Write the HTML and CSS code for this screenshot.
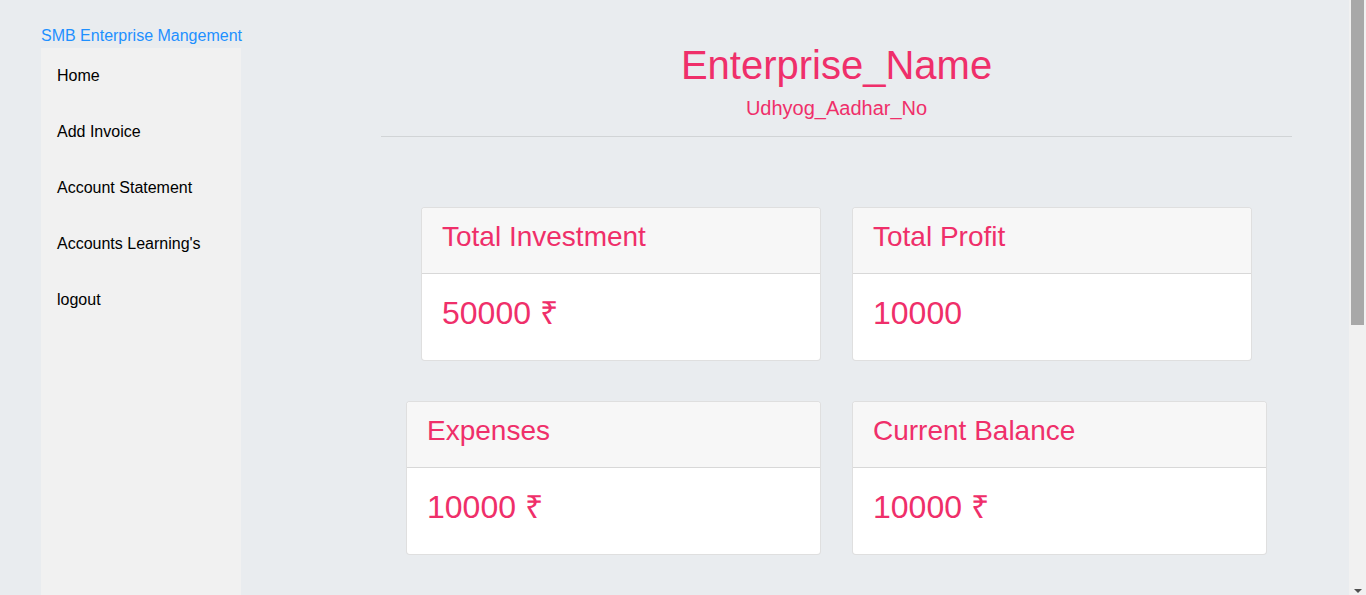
FILE: index.html
```html
<!DOCTYPE html>
<html lang="en">
<head>
<meta charset="utf-8">
<title>SMB Enterprise Mangement</title>
<link rel="stylesheet" href="styles.css">
</head>
<body>
<div class="layout">
  <aside class="side">
    <div class="brand">SMB Enterprise Mangement</div>
    <ul class="nav">
      <li><a href="#">Home</a></li>
      <li><a href="#">Add Invoice</a></li>
      <li><a href="#">Account Statement</a></li>
      <li><a href="#">Accounts Learning's</a></li>
      <li><a href="#">logout</a></li>
    </ul>
  </aside>
  <main class="main">
    <header class="head">
      <h1 class="ent-name">Enterprise_Name</h1>
      <p class="ent-no">Udhyog_Aadhar_No</p>
    </header>
    <hr class="rule">
    <div class="row row-one">
      <div class="card">
        <div class="card-head"><h3>Total Investment</h3></div>
        <div class="card-body"><h2>50000 ₹</h2></div>
      </div>
      <div class="card">
        <div class="card-head"><h3>Total Profit</h3></div>
        <div class="card-body"><h2>10000</h2></div>
      </div>
    </div>
    <div class="row row-two">
      <div class="card">
        <div class="card-head"><h3>Expenses</h3></div>
        <div class="card-body"><h2>10000 ₹</h2></div>
      </div>
      <div class="card">
        <div class="card-head"><h3>Current Balance</h3></div>
        <div class="card-body"><h2>10000 ₹</h2></div>
      </div>
    </div>
  </main>
</div>
<div class="scrollbar" aria-hidden="true">
  <div class="scroll-thumb"></div>
  <div class="scroll-arrow"></div>
</div>
</body>
</html>
```

FILE: styles.css
```css
* { box-sizing: border-box; }

html, body {
  margin: 0;
  padding: 0;
}

body {
  background: #e9ecef;
  font-family: "Liberation Sans", Arial, sans-serif;
  color: #000;
}

.layout {
  display: flex;
  align-items: flex-start;
  padding-right: 17px;
}

.side {
  margin-left: 41px;
  width: 200px;
  flex: none;
  padding-top: 27px;
  display: flex;
  flex-direction: column;
}

.brand {
  font-size: 16px;
  line-height: 18px;
  color: #1e90ff;
  white-space: nowrap;
  margin-bottom: 3px;
}

.nav {
  list-style: none;
  margin: 0;
  padding: 0;
  background: #f1f1f1;
  min-height: 1010px;
}

.nav a {
  display: block;
  padding: 18px 16px;
  font-size: 16px;
  line-height: 20px;
  color: #000;
  text-decoration: none;
}

.main {
  flex: 1;
  padding: 41px 57px 0 140px;
  display: flex;
  flex-direction: column;
}

.head {
  text-align: center;
  color: #ef2f6a;
}

.ent-name {
  margin: 0;
  font-size: 40px;
  line-height: 48px;
  font-weight: normal;
}

.ent-no {
  margin: 7px 0 0;
  font-size: 20px;
  line-height: 24px;
}

.rule {
  margin: 16px 0 0;
  border: 0;
  border-top: 1px solid rgba(0, 0, 0, 0.1);
  height: 0;
}

.row {
  display: flex;
  justify-content: center;
  gap: 31px;
}

.row-one { margin-top: 70px; }
.row-one .card { width: 400px; }

.row-two { margin-top: 40px; }
.row-two .card { width: 415px; }

.card {
  background: #fff;
  border: 1px solid rgba(0, 0, 0, 0.125);
  border-radius: 4px;
  overflow: hidden;
  color: #ef2f6a;
}

.card-head {
  background: #f7f7f7;
  border-bottom: 1px solid rgba(0, 0, 0, 0.125);
  padding: 12px 20px;
}

.card-head h3 {
  margin: 0 0 8px;
  font-size: 28px;
  line-height: 33px;
  font-weight: normal;
}

.card-body {
  padding: 20px;
}

.card-body h2 {
  margin: 0 0 8px;
  font-size: 32px;
  line-height: 38px;
  font-weight: normal;
}

/* browser-style vertical scrollbar overlay */
.scrollbar {
  position: fixed;
  top: 0;
  right: 0;
  width: 17px;
  height: 100vh;
  background: #f1f1f1;
  display: flex;
  flex-direction: column;
  align-items: center;
  justify-content: space-between;
}

.scroll-thumb {
  width: 13px;
  height: 325px;
  background: #a8a8a8;
}

.scroll-arrow {
  width: 0;
  height: 0;
  border-left: 4px solid transparent;
  border-right: 4px solid transparent;
  border-top: 4px solid #505050;
  margin-bottom: 2px;
}
```
